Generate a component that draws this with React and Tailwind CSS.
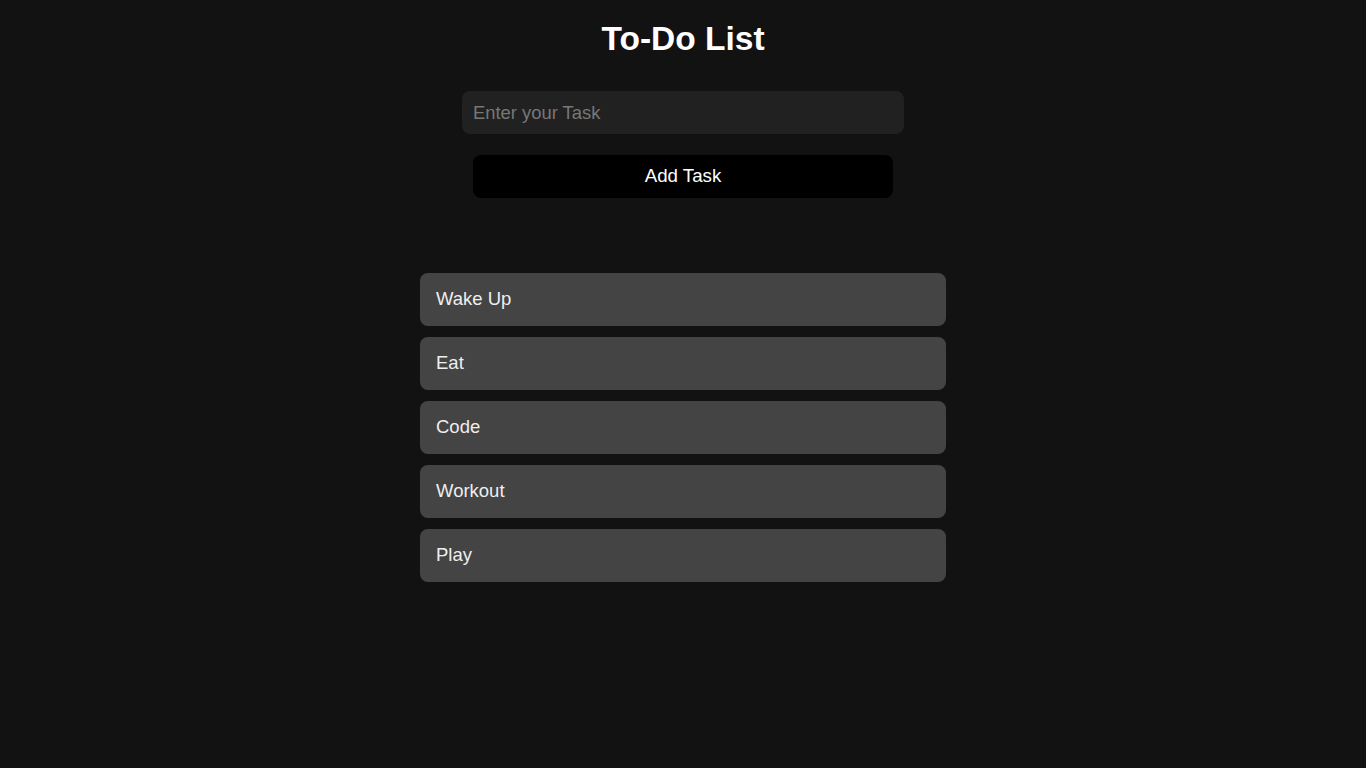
import { useState } from 'react'

const initialTasks = ['Wake Up', 'Eat', 'Code', 'Workout', 'Play']

export default function App() {
  const [tasks, setTasks] = useState(initialTasks)
  const [text, setText] = useState('')

  const addTask = () => {
    if (!text.trim()) return
    setTasks([...tasks, text.trim()])
    setText('')
  }

  return (
    <div className="min-h-screen bg-[#121212] text-white font-['Liberation_Sans',Arial,sans-serif] flex flex-col items-center">
      <h1 className="mt-5 h-[38px] leading-[38px] text-[33.5px] font-bold">To-Do List</h1>
      <input
        value={text}
        onChange={(e) => setText(e.target.value)}
        placeholder="Enter your Task"
        className="mt-[33px] w-[442px] h-[43px] px-[11px] rounded-lg bg-[#212121] text-[18.4px] text-white placeholder:text-[#777] outline-none"
      />
      <button
        onClick={addTask}
        className="mt-[21px] w-[420px] h-[43px] rounded-lg bg-black text-[18.7px] text-white"
      >
        Add Task
      </button>
      <ul className="mt-[75px] w-[526px] flex flex-col gap-[11px]">
        {tasks.map((t, i) => (
          <li key={i} className="h-[53px] flex items-center px-4 pb-[2px] rounded-lg bg-[#444] text-[18.5px] text-[#eee]">
            {t}
          </li>
        ))}
      </ul>
    </div>
  )
}
